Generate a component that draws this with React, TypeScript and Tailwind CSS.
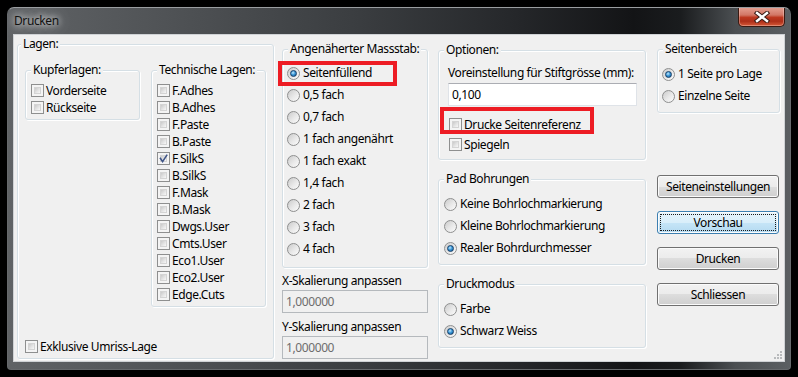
import React from "react";

function CheckBox({ checked = false }: { checked?: boolean }) {
  return (
    <span className="relative block shrink-0 w-[13px] h-[13px] border border-[#8e8f8f] bg-[#f4f4f4] p-[2px]">
      <span className="block w-full h-full border border-[#d4d4d4] bg-[linear-gradient(135deg,#c9c9c9_0%,#e4e4e4_55%,#f7f7f7_100%)]" />
      {checked && (
        <svg className="absolute left-0 top-0" width="11" height="11" viewBox="0 0 11 11">
          <path d="M2 4.8 L4.6 8.6 L9.2 1.6" fill="none" stroke="#3f5487" strokeWidth="1.6" />
        </svg>
      )}
    </span>
  );
}

function Radio({ checked = false }: { checked?: boolean }) {
  return (
    <span className="shrink-0 w-[13px] h-[13px] rounded-full border border-[#8e8f8f] bg-[linear-gradient(135deg,#cbcbcb_0%,#e9e9e9_55%,#fbfbfb_100%)] flex items-center justify-center">
      {checked && (
        <span className="w-[7px] h-[7px] rounded-full border border-[#173f68] bg-[radial-gradient(circle_at_40%_35%,#c4e9fc_0%,#3b98d8_45%,#0f5490_100%)]" />
      )}
    </span>
  );
}

function CheckRow({ label, checked = false }: { label: string; checked?: boolean }) {
  return (
    <div className="flex items-center h-[17px] gap-[2px] whitespace-nowrap">
      <CheckBox checked={checked} />
      <span className="leading-[16px]">{label}</span>
    </div>
  );
}

function RadioRow({ label, checked = false }: { label: string; checked?: boolean }) {
  return (
    <div className="flex items-center h-[22px] gap-[3px] whitespace-nowrap">
      <Radio checked={checked} />
      <span className="leading-[16px]">{label}</span>
    </div>
  );
}

function Group({
  label,
  className = "",
  labelLeft = "left-[5px]",
  children,
}: {
  label: string;
  className?: string;
  labelLeft?: string;
  children?: React.ReactNode;
}) {
  return (
    <div
      className={`relative border border-[#d5dfe5] rounded-[3px] shadow-[inset_1px_1px_0_#ffffff,1px_1px_0_#ffffff] ${className}`}
    >
      <span className={`absolute top-[-9px] ${labelLeft} px-[2px] bg-[#f0f0f0] leading-[16px] whitespace-nowrap`}>
        {label}
      </span>
      {children}
    </div>
  );
}

function Btn({ label, def = false }: { label: string; def?: boolean }) {
  return (
    <div
      className={`relative w-[122px] h-[23px] rounded-[3px] border flex items-center justify-center shadow-[inset_0_0_0_1px_#fbfbfb] ${
        def
          ? "border-[#3c7fb1] bg-[linear-gradient(#e6f4fc_0%,#d9eefa_50%,#c6e5f7_50%,#b4daf1_100%)]"
          : "border-[#707070] bg-[linear-gradient(#f2f2f2_0%,#ebebeb_50%,#dddddd_50%,#cfcfcf_100%)]"
      }`}
    >
      {def && <span className="absolute inset-[2px] border border-dotted border-[#1a1a1a]" />}
      <span className="leading-[16px]">{label}</span>
    </div>
  );
}

const tech = [
  "F.Adhes",
  "B.Adhes",
  "F.Paste",
  "B.Paste",
  "F.SilkS",
  "B.SilkS",
  "F.Mask",
  "B.Mask",
  "Dwgs.User",
  "Cmts.User",
  "Eco1.User",
  "Eco2.User",
  "Edge.Cuts",
];

const scales = [
  "Seitenfüllend",
  "0,5 fach",
  "0,7 fach",
  "1 fach angenährt",
  "1 fach exakt",
  "1,4 fach",
  "2 fach",
  "3 fach",
  "4 fach",
];

export default function App() {
  return (
    <div className="w-[798px] h-[377px] bg-black pt-[7px] pl-[7px] font-['Noto_Sans',sans-serif] text-[12px] tracking-[-0.4px] text-black">
      <div className="w-[784px] h-[363px] rounded-t-[7px] rounded-b-[4px] border border-[#66696c] border-t-[#9a9da0] bg-[linear-gradient(90deg,#606366_0%,#505356_20%,#3a3d40_45%,#25272a_65%,#131416_80%,#1a1c1e_86%,#4b4f52_93%,#5b5f62_100%)] flex flex-col overflow-hidden">
        {/* title bar */}
        <div className="h-[26px] shrink-0 flex items-start justify-between">
          <div className="pl-[6px] h-[26px] flex items-center">
            <span className="text-[#111] [text-shadow:0_0_6px_rgba(255,255,255,0.9),0_0_12px_rgba(255,255,255,0.7),0_0_18px_rgba(255,255,255,0.5)]">
              Drucken
            </span>
          </div>
          <div className="mr-[5px] mt-[-1px] w-[47px] h-[20px] rounded-b-[5px] border border-[#3b1a12] border-t-0 bg-[linear-gradient(180deg,#e6a394_0%,#d27766_42%,#bd3820_55%,#ae2f19_75%,#d65a39_100%)] shadow-[inset_0_0_0_1px_rgba(255,230,220,0.35)] flex items-center justify-center">
            <svg width="16" height="12" viewBox="0 0 16 12">
              <path d="M3 2 L13 10 M13 2 L3 10" stroke="#3a1d17" strokeWidth="4.4" strokeLinecap="square" />
              <path d="M3 2 L13 10 M13 2 L3 10" stroke="#ffffff" strokeWidth="2.4" strokeLinecap="square" />
            </svg>
          </div>
        </div>

        {/* client */}
        <div className="relative mx-[5px] h-[328px] shrink-0 border border-[#cfd2d5] bg-[#f0f0f0] flex items-start">
          {/* column 1 */}
          <Group
            label="Lagen:"
            labelLeft="left-[3px]"
            className="ml-[3px] mt-[9px] w-[257px] h-[315px] shrink-0 flex flex-col pt-[25px] pl-[7px] pb-[3px]"
          >
            <div className="flex items-start gap-[11px]">
              <Group label="Kupferlagen:" className="w-[115px] h-[50px] pt-[11px] pl-[5px]">
                <CheckRow label="Vorderseite" />
                <CheckRow label="Rückseite" />
              </Group>
              <Group label="Technische Lagen:" className="w-[115px] h-[237px] pt-[11px] pl-[5px]">
                {tech.map((t) => (
                  <CheckRow key={t} label={t} checked={t === "F.SilkS"} />
                ))}
              </Group>
            </div>
            <div className="mt-auto">
              <CheckRow label="Exklusive Umriss-Lage" />
            </div>
          </Group>

          {/* column 2 */}
          <div className="ml-[8px] mt-[14px] w-[146px] shrink-0 flex flex-col">
            <Group label="Angenäherter Massstab:" className="h-[219px] pt-[12px] pl-[4px]">
              {scales.map((s, i) => (
                <div key={s} className="relative">
                  <RadioRow label={s} checked={i === 0} />
                  {i === 0 && (
                    <span className="absolute left-[-9px] top-[-1px] w-[119px] h-[25px] border-[4px] border-[#ed1c24]" />
                  )}
                </div>
              ))}
            </Group>
            <div className="mt-[5px] h-[16px] leading-[16px] whitespace-nowrap">X-Skalierung anpassen</div>
            <div className="mt-[1px] h-[23px] border border-[#b5b9bd] bg-[#f0f0f0] text-[#6d6d6d] pl-[3px] flex items-center">
              1,000000
            </div>
            <div className="mt-[6px] h-[16px] leading-[16px] whitespace-nowrap">Y-Skalierung anpassen</div>
            <div className="mt-[1px] h-[23px] border border-[#b5b9bd] bg-[#f0f0f0] text-[#6d6d6d] pl-[3px] flex items-center">
              1,000000
            </div>
          </div>

          {/* column 3 */}
          <div className="ml-[10px] mt-[15px] w-[208px] shrink-0 flex flex-col">
            <Group label="Optionen:" className="h-[110px] pt-[14px] pl-[9px]">
              <div className="h-[16px] leading-[16px] whitespace-nowrap">Voreinstellung für Stiftgrösse (mm):</div>
              <div className="mt-[2px] w-[189px] h-[23px] border border-[#dfe3e8] border-t-[#abadb3] bg-white pl-[3px] flex items-center">
                0,100
              </div>
              <div className="relative mt-[10px] ml-[1px]">
                <CheckRow label="Drucke Seitenreferenz" />
                <span className="absolute left-[-9px] top-[-9px] w-[154px] h-[27px] border-[4px] border-[#ed1c24]" />
              </div>
              <div className="mt-[3px] ml-[1px]">
                <CheckRow label="Spiegeln" />
              </div>
            </Group>
            <Group label="Pad Bohrungen" className="mt-[19px] h-[86px] pt-[13px] pl-[5px]">
              <RadioRow label="Keine Bohrlochmarkierung" />
              <RadioRow label="Kleine Bohrlochmarkierung" />
              <RadioRow label="Realer Bohrdurchmesser" checked />
            </Group>
            <Group label="Druckmodus" className="mt-[19px] h-[64px] pt-[13px] pl-[5px]">
              <RadioRow label="Farbe" />
              <RadioRow label="Schwarz Weiss" checked />
            </Group>
          </div>

          {/* column 4 */}
          <div className="ml-[11px] mt-[14px] w-[123px] shrink-0 flex flex-col">
            <Group label="Seitenbereich" className="h-[64px] pt-[13px] pl-[4px]">
              <RadioRow label="1 Seite pro Lage" checked />
              <RadioRow label="Einzelne Seite" />
            </Group>
            <div className="mt-[62px] flex flex-col gap-[13px]">
              <Btn label="Seiteneinstellungen" />
              <Btn label="Vorschau" def />
              <Btn label="Drucken" />
              <Btn label="Schliessen" />
            </div>
          </div>

          {/* resize grip */}
          <svg className="absolute right-[1px] bottom-[1px]" width="10" height="10" viewBox="0 0 10 10">
            {[
              [7, 1],
              [4, 4],
              [7, 4],
              [1, 7],
              [4, 7],
              [7, 7],
            ].map(([x, y]) => (
              <rect key={`${x}-${y}`} x={x} y={y} width="2" height="2" fill="#b8babc" />
            ))}
          </svg>
        </div>
      </div>
    </div>
  );
}
